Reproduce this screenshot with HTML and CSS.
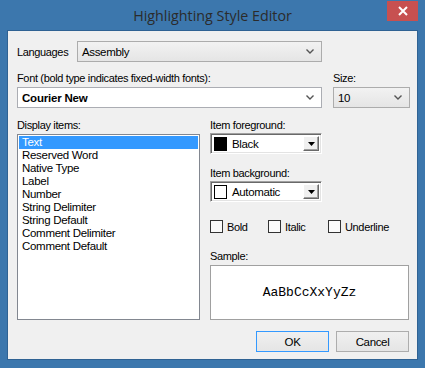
FILE: index.html
```html
<!DOCTYPE html>
<html>
<head>
<meta charset="utf-8">
<link rel="stylesheet" href="styles.css">
</head>
<body>
<div class="window">
  <div class="titlebar">
    <span></span>
    <span class="title">Highlighting Style Editor</span>
    <span class="close"><svg width="12" height="10" viewBox="0 0 12 10"><path d="M2 1 L10 9 M10 1 L2 9" stroke="#fff" stroke-width="2"/></svg></span>
  </div>
  <div class="client">
    <div class="row-lang">
      <span class="lbl lang-lbl">Languages</span>
      <div class="combo gray lang-combo"><span>Assembly</span><svg class="chev" width="8" height="5" viewBox="0 0 8 5"><path d="M0.5 0.5 L4 4 L7.5 0.5" fill="none" stroke="#555" stroke-width="1.4"/></svg></div>
    </div>
    <div class="row-font">
      <div class="col">
        <span class="lbl">Font (bold type indicates fixed-width fonts):</span>
        <div class="combo white font-combo"><span class="bold">Courier New</span><svg class="chev" width="8" height="5" viewBox="0 0 8 5"><path d="M0.5 0.5 L4 4 L7.5 0.5" fill="none" stroke="#555" stroke-width="1.4"/></svg></div>
      </div>
      <div class="col">
        <span class="lbl">Size:</span>
        <div class="combo gray size-combo"><span>10</span><svg class="chev" width="8" height="5" viewBox="0 0 8 5"><path d="M0.5 0.5 L4 4 L7.5 0.5" fill="none" stroke="#555" stroke-width="1.4"/></svg></div>
      </div>
    </div>
    <div class="main">
      <div class="left">
        <span class="lbl">Display items:</span>
        <div class="list">
          <div class="item sel">Text</div>
          <div class="item">Reserved Word</div>
          <div class="item">Native Type</div>
          <div class="item">Label</div>
          <div class="item">Number</div>
          <div class="item">String Delimiter</div>
          <div class="item">String Default</div>
          <div class="item">Comment Delimiter</div>
          <div class="item">Comment Default</div>
        </div>
      </div>
      <div class="right">
        <span class="lbl">Item foreground:</span>
        <div class="cpick">
          <span class="swatch black"></span><span class="ctext">Black</span>
          <span class="dbtn"><svg width="7" height="4" viewBox="0 0 7 4"><path d="M0 0 H7 L3.5 4 Z" fill="#000"/></svg></span>
        </div>
        <span class="lbl bg-lbl">Item background:</span>
        <div class="cpick">
          <span class="swatch"></span><span class="ctext">Automatic</span>
          <span class="dbtn"><svg width="7" height="4" viewBox="0 0 7 4"><path d="M0 0 H7 L3.5 4 Z" fill="#000"/></svg></span>
        </div>
        <div class="checks">
          <label class="chk cb-bold"><span class="box"></span>Bold</label>
          <label class="chk cb-italic"><span class="box"></span>Italic</label>
          <label class="chk"><span class="box"></span>Underline</label>
        </div>
        <span class="lbl sample-lbl">Sample:</span>
        <div class="sample">AaBbCcXxYyZz</div>
      </div>
    </div>
    <div class="buttons">
      <div class="btn default">OK</div>
      <div class="btn">Cancel</div>
    </div>
  </div>
</div>
</body>
</html>
```

FILE: styles.css
```css
html, body {
  margin: 0;
  padding: 0;
}
body {
  width: 425px;
  height: 368px;
  background: #3c77ad;
  overflow: hidden;
  font-family: "Liberation Sans", Arial, sans-serif;
  font-size: 11px;
  letter-spacing: -0.35px;
  color: #000;
}
.window {
  width: 425px;
  height: 368px;
  display: flex;
  flex-direction: column;
}
.titlebar {
  height: 30px;
  display: grid;
  grid-template-columns: 1fr auto 1fr;
  align-items: start;
}
.title {
  font-family: "Open Sans", "Noto Sans", sans-serif;
  font-size: 14.3px;
  letter-spacing: 0;
  color: #2b2b2b;
  line-height: 30px;
  padding-top: 1px;
}
.close {
  justify-self: end;
  margin: 1px 7px 0 0;
  width: 31px;
  height: 20px;
  background: #c75050;
  display: flex;
  align-items: center;
  justify-content: center;
}
.client {
  margin: 0 7px;
  border: 1px solid #2f6293;
  background: #f0f0f0;
  padding: 10px 7px 0 9px;
  box-sizing: content-box;
  display: flex;
  flex-direction: column;
  height: 318px;
}
.lbl {
  display: block;
  line-height: 14px;
  height: 14px;
  white-space: nowrap;
}
.row-lang {
  display: flex;
  align-items: center;
  height: 21px;
}
.lang-lbl {
  width: 60px;
}
.combo {
  box-sizing: border-box;
  height: 21px;
  border: 1px solid #acacac;
  display: flex;
  align-items: center;
  justify-content: space-between;
  padding: 0 7px 0 4px;
  font-size: 11.5px;
}
.combo.gray {
  background: linear-gradient(#f2f2f2, #e5e5e5);
}
.combo.white {
  background: #fff;
  border-color: #abadb3;
}
.lang-combo {
  width: 245px;
}
.font-combo {
  width: 305px;
}
.size-combo {
  width: 77px;
}
.bold {
  font-weight: bold;
  font-size: 11.5px;
  letter-spacing: -0.2px;
}
.row-font {
  display: flex;
  gap: 11px;
  margin-top: 9px;
}
.col .lbl {
  margin-bottom: 2px;
}
.main {
  display: flex;
  gap: 10px;
  margin-top: 10px;
}
.left {
  width: 183px;
}
.left .lbl {
  margin-bottom: 2px;
}
.list {
  box-sizing: border-box;
  height: 186px;
  border: 1px solid #828790;
  background: #fff;
  padding: 1px;
  font-size: 11.5px;
  letter-spacing: -0.3px;
}
.item {
  height: 13px;
  line-height: 13px;
  padding-left: 3px;
  white-space: nowrap;
}
.item.sel {
  background: #3399ff;
  color: #fff;
}
.right {
  width: 199px;
  display: flex;
  flex-direction: column;
}
.right > .lbl {
  margin-bottom: 1px;
}
.cpick {
  box-sizing: border-box;
  width: 112px;
  height: 21px;
  background: #fff;
  border: 1px solid;
  border-color: #a0a0a0 #fff #fff #a0a0a0;
  box-shadow: inset 1px 1px 0 #696969, inset -1px -1px 0 #e3e3e3;
  display: flex;
  align-items: center;
  padding: 0 2px 0 3px;
  font-size: 11.5px;
}
.swatch {
  width: 11px;
  height: 12px;
  border: 1px solid #000;
  background: #fff;
  flex: none;
}
.swatch.black {
  background: #000;
}
.ctext {
  margin-left: 5px;
  flex: 1;
}
.dbtn {
  box-sizing: border-box;
  width: 16px;
  height: 15px;
  background: #f0f0f0;
  border: 1px solid;
  border-color: #fff #696969 #696969 #fff;
  box-shadow: inset -1px -1px 0 #a0a0a0;
  display: flex;
  align-items: center;
  justify-content: center;
}
.bg-lbl {
  margin-top: 12px;
}
.checks {
  display: flex;
  margin-top: 18px;
  height: 13px;
  align-items: center;
}
.chk {
  display: flex;
  align-items: center;
  gap: 4px;
}
.cb-bold {
  width: 58px;
}
.cb-italic {
  width: 60px;
}
.box {
  box-sizing: border-box;
  width: 13px;
  height: 13px;
  border: 1px solid #333;
  background: #fafafa;
}
.sample-lbl {
  margin-top: 16px;
}
.sample-lbl.lbl {
  margin-bottom: 2px;
}
.sample {
  box-sizing: border-box;
  width: 199px;
  height: 55px;
  border: 1px solid #a0a0a0;
  background: #fff;
  display: flex;
  align-items: center;
  justify-content: center;
  font-family: "Liberation Mono", "Courier New", monospace;
  font-size: 13px;
  letter-spacing: 0;
}
.buttons {
  display: flex;
  justify-content: flex-end;
  gap: 7px;
  margin-top: 11px;
  padding-right: 1px;
}
.btn {
  box-sizing: border-box;
  width: 73px;
  height: 21px;
  border: 1px solid #adadad;
  background: linear-gradient(#f0f0f0, #e5e5e5);
  display: flex;
  align-items: center;
  justify-content: center;
  font-size: 11.5px;
}
.btn.default {
  border-color: #3399ff;
}
```
